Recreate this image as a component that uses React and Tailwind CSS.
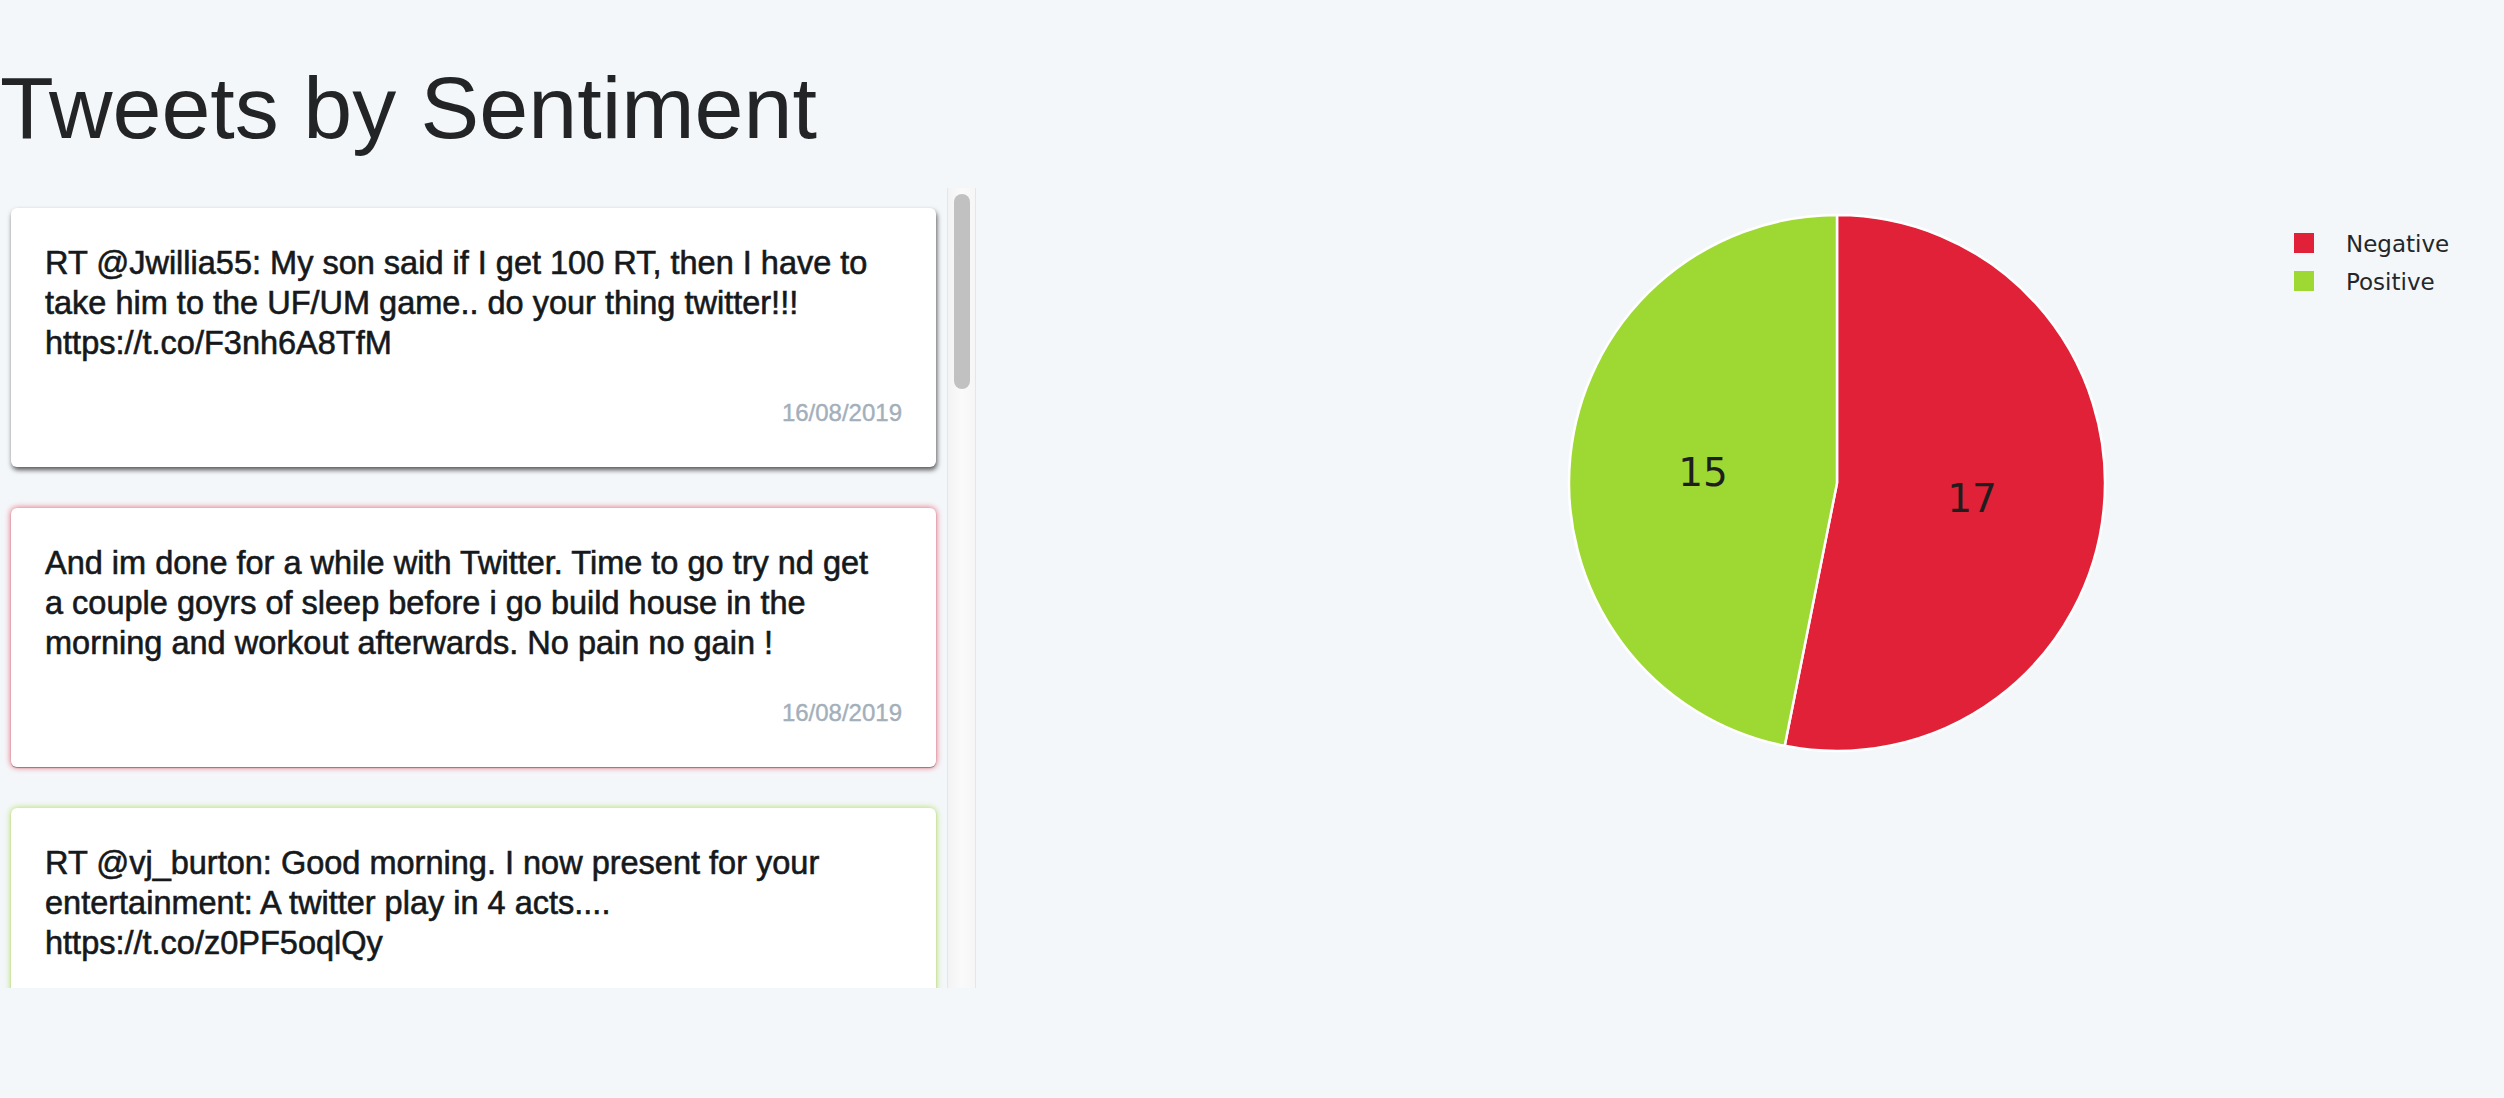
import React from "react";

const tweets = [
  {
    lines: [
      "RT @Jwillia55: My son said if I get 100 RT, then I have to",
      "take him to the UF/UM game.. do your thing twitter!!!",
      "https://t.co/F3nh6A8TfM",
    ],
    date: "16/08/2019",
    shadow: "shadow-[1px_3px_5px_rgba(0,0,0,0.65)]",
  },
  {
    lines: [
      "And im done for a while with Twitter. Time to go try nd get",
      "a couple goyrs of sleep before i go build house in the",
      "morning and workout afterwards. No pain no gain !",
    ],
    date: "16/08/2019",
    shadow: "shadow-[0_1px_1px_rgba(0,0,0,0.35),0_0_6px_rgba(226,33,55,0.75)]",
  },
  {
    lines: [
      "RT @vj_burton: Good morning. I now present for your",
      "entertainment: A twitter play in 4 acts....",
      "https://t.co/z0PF5oqlQy",
    ],
    date: "16/08/2019",
    shadow: "shadow-[0_1px_1px_rgba(0,0,0,0.3),0_0_6px_rgba(157,216,51,0.85)]",
  },
];

function Card({ t }) {
  return (
    <div className={`shrink-0 rounded-[6px] bg-white px-[34px] pt-[35px] pb-[38px] ${t.shadow}`}>
      <div className="text-[32.5px] leading-[40px] text-[#16191c] whitespace-nowrap [-webkit-text-stroke:0.6px_#16191c]">
        {t.lines.map((l, i) => (
          <div key={i}>{l}</div>
        ))}
      </div>
      <div className="mt-[34px] text-right text-[24px] leading-[32px] text-[#a3afba] [-webkit-text-stroke:0.4px_#a3afba]">{t.date}</div>
    </div>
  );
}

function Pie() {
  const cx = 861, cy = 295, r = 268;
  const a = (191.25 * Math.PI) / 180;
  const ex = cx + r * Math.sin(a);
  const ey = cy - r * Math.cos(a);
  const neg = `M ${cx} ${cy} L ${cx} ${cy - r} A ${r} ${r} 0 1 1 ${ex} ${ey} Z`;
  const pos = `M ${cx} ${cy} L ${ex} ${ey} A ${r} ${r} 0 0 1 ${cx} ${cy - r} Z`;
  return (
    <svg width="1528" height="800" viewBox="0 0 1528 800" className="block">
      <path d={neg} fill="#e12137" stroke="#ffffff" strokeWidth="2.5" strokeLinejoin="round" />
      <path d={pos} fill="#9dd833" stroke="#ffffff" strokeWidth="2.5" strokeLinejoin="round" />
      <text x="996" y="324" textAnchor="middle" fontFamily="'DejaVu Sans', Verdana, sans-serif" fontSize="39" fill="#1e1e1e">17</text>
      <text x="727" y="298" textAnchor="middle" fontFamily="'DejaVu Sans', Verdana, sans-serif" fontSize="39" fill="#1e1e1e">15</text>
      <rect x="1318" y="45" width="20" height="20" fill="#e12137" />
      <rect x="1318" y="83" width="20" height="20" fill="#9dd833" />
      <text x="1370" y="64" fontFamily="'DejaVu Sans', Verdana, sans-serif" fontSize="23" fill="#22272b">Negative</text>
      <text x="1370" y="102" fontFamily="'DejaVu Sans', Verdana, sans-serif" fontSize="23" fill="#22272b">Positive</text>
    </svg>
  );
}

export default function App() {
  return (
    <div className="min-h-screen bg-[#f4f7fa] font-['Liberation_Sans',Arial,sans-serif]">
      <h1 className="pt-[64px] text-[88px] leading-[88px] font-normal text-[#222426] whitespace-nowrap">
        Tweets by Sentiment
      </h1>
      <div className="mt-[36px] flex h-[800px]">
        <div className="flex w-[976px] shrink-0">
          <div className="flex w-[947px] flex-col gap-[41px] overflow-hidden px-[11px] pt-[20px]">
            {tweets.map((t, i) => (
              <Card key={i} t={t} />
            ))}
          </div>
          <div className="w-[29px] border-x border-[#e6e6e6] bg-gradient-to-r from-[#f3f3f3] via-[#fafafa] to-[#f6f6f6] pt-[6px] pl-[6px]">
            <div className="h-[195px] w-[16px] rounded-full bg-[#c1c1c1]" />
          </div>
        </div>
        <div className="flex-1">
          <Pie />
        </div>
      </div>
    </div>
  );
}
